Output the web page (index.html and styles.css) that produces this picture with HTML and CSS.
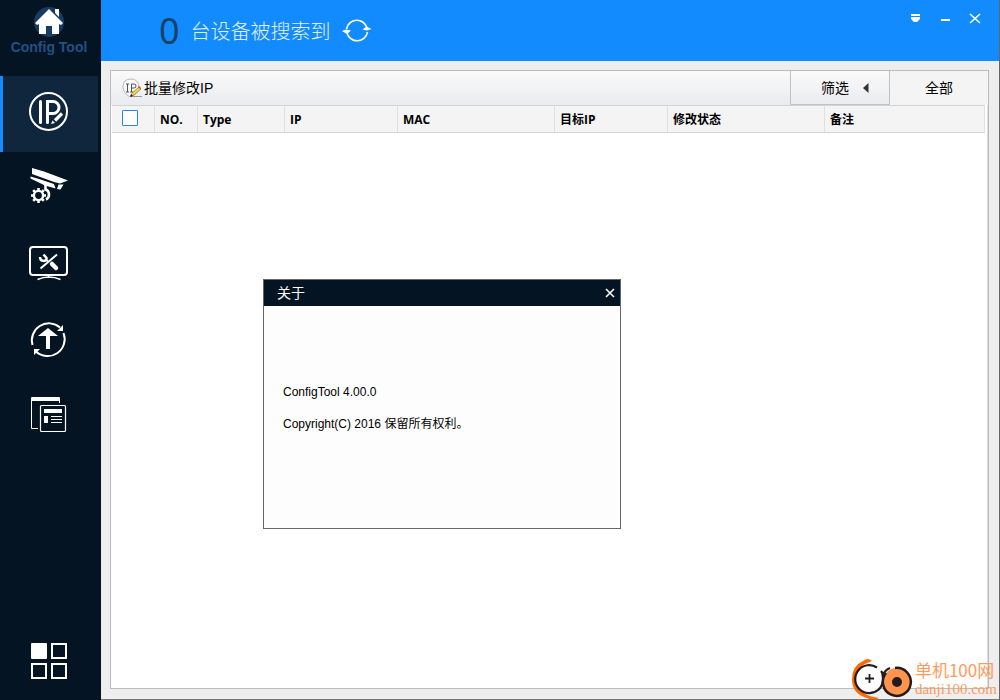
FILE: index.html
```html
<!DOCTYPE html>
<html lang="zh-CN">
<head>
<meta charset="utf-8">
<title>Config Tool</title>
<meta name="viewport" content="width=device-width, initial-scale=1">
<link rel="stylesheet" href="styles.css">
</head>
<body>
<div class="window">
  <aside class="sidebar">
    <div class="brand">
      <svg class="brand-icon" viewBox="0 0 32 32" aria-hidden="true">
        <circle cx="16" cy="16" r="15" fill="#173c63"/>
        <path d="M16 3 30 17 28 19 26 18V28H19V20H13V28H6V18L4 19 2 17ZM22 3h4v8l-4-4Z" fill="#fff"/>
      </svg>
      <span class="brand-name">Config Tool</span>
    </div>
    <nav class="nav">
      <button class="nav-item active" type="button" aria-label="修改IP">
        <svg class="nav-icon" viewBox="0 0 40 44">
          <circle cx="19.500" cy="19.500" r="18.500" stroke-width="2"/>
          <path d="M11.500 9.500v21M18.500 30.500V9.500h5.500a6 6 0 0 1 0 12h-5.500" stroke-width="3" stroke-linecap="round"/>
          <path d="M33 21.500 26 28.500" stroke-width="3.200"/>
          <path class="solid" d="m23.500 28.500 2.500 2.500-4 1Z"/>
        </svg>
      </button>
      <button class="nav-item" type="button" aria-label="设备配置">
        <svg class="nav-icon" viewBox="0 0 40 44">
          <path class="solid" d="M3 0 15 3.500 39 12.500 31 15.500 25 14 3 6ZM1.500 8.500 10 11 25 16 26.500 20.500 16 17.500 1.500 10.500ZM29.500 16.500h5l-3 5-3.500-.5Z"/>
          <path d="M16.500 16v5.500q3.500 1 3.500 5c0 2.500-1 4-3 5" stroke-width="2.600"/>
          <circle cx="9.500" cy="27.500" r="4.600" stroke-width="2.400"/>
          <path d="M9.500 20v3M9.500 32v3M2 27.500h3M14 27.500h3M4.200 22.200l2 2M12.800 30.800l2 2M14.800 22.200l-2 2M6.200 30.800l-2 2" stroke-width="2.600"/>
        </svg>
      </button>
      <button class="nav-item" type="button" aria-label="系统设置">
        <svg class="nav-icon" viewBox="0 0 40 44">
          <rect x="1" y="3" width="37" height="28" rx="3" stroke-width="2"/>
          <path d="M8.500 35.500c7-3 16-3 23 0M19.500 31v3" stroke-width="1.500"/>
          <path d="M11.500 24.500 28 10.500" stroke-width="2"/>
          <path d="m23 20 4 4" stroke-width="4.500" stroke-linecap="round"/>
          <path d="M11 13c0 5 7 5 6.500 1l-3-3.500M17 16l2 1" stroke-width="2.500"/>
        </svg>
      </button>
      <button class="nav-item" type="button" aria-label="升级">
        <svg class="nav-icon" viewBox="0 0 40 44">
          <path d="M3.500 25A17 17 0 0 1 31 7.500M34.500 13A17 17 0 0 1 7 31.500" stroke-width="2"/>
          <path class="solid" d="M34 5v6h-6ZM5 29h6l-6 6ZM19 8 29 16h-8v13h-4V16H9Z"/>
        </svg>
      </button>
      <button class="nav-item" type="button" aria-label="日志">
        <svg class="nav-icon" viewBox="0 0 40 44">
          <path class="solid" d="M2 2q0-1 1-1H30q1 0 1 1V7H30V5H3V32H9V33H3q-1 0-1-1ZM15 13H33v4H15ZM15 20h4v7H15ZM22 20H33v1H22ZM22 23H33v1H22ZM22 26H33v1H22Z"/>
          <rect x="11.500" y="9.500" width="25" height="26" rx="1" stroke-width="1.200"/>
        </svg>
      </button>
    </nav>
    <button class="apps" type="button" aria-label="全部功能">
      <svg class="apps-icon" viewBox="0 0 36 36">
        <rect class="solid" x="0" y="0" width="16" height="16" rx="1"/>
        <path d="M21 1h14v14H21ZM1 21h14v14H1ZM21 21h14v14H21Z" stroke-width="2"/>
      </svg>
    </button>
  </aside>

  <div class="main">
    <header class="topbar">
      <h1 class="found"><span class="count">0</span><span class="found-label">台设备被搜索到</span></h1>
      <button class="refresh" type="button" aria-label="刷新">
        <svg viewBox="0 0 30 24">
          <path d="M4.500 10A10.500 10.500 0 0 1 25 9M25.500 13A10.500 10.500 0 0 1 5 14" fill="none" stroke="#fff" stroke-width="1.600"/>
          <path d="M0 11 5 8 9 11.500 4 12.500ZM20.500 12.500 25 11.500 29.500 13 24.500 15.500Z" transform="matrix(1 0 0 -1 0 23)" fill="#fff"/>
        </svg>
      </button>
      <div class="controls">
        <button type="button" aria-label="菜单"><svg viewBox="0 0 12 12"><path d="M2 2h9v2H2ZM2 5h9v2L8 10H5L2 7Z" fill="#fff"/></svg></button>
        <button type="button" aria-label="最小化"><svg viewBox="0 0 12 12"><path d="M2 7h9v2H2Z" fill="#fff"/></svg></button>
        <button type="button" aria-label="关闭"><svg viewBox="0 0 12 12"><path d="m1 2 10 9M11 2 1 11" stroke="#fff" stroke-width="1.600"/></svg></button>
      </div>
    </header>

    <main class="panel">
      <div class="toolbar">
        <button class="batch" type="button">
          <svg class="batch-icon" viewBox="0 0 20 20" aria-hidden="true">
            <path d="M9 1a8 8 0 0 1 7 12Q13 18 8 19 1 15 1 9 1 1 9 1Z" fill="#f8f8f8" stroke="#b9b9b9"/>
            <path d="M4 6h3M5.500 6v8M4 14h3M9.500 14V6H12a2 2 0 0 1 0 4H9.500M8 14h3" fill="none" stroke="#555"/>
            <path d="M9 18.500h11" stroke="#999"/>
            <path d="m9 18 1-3 7-6 2 2-7 6Z" fill="#f0d455" stroke="#89722e" stroke-width=".7"/>
            <path d="m16 9 1-1 2 2-1 1Z" fill="#e33b32"/>
            <path d="m8 19 1-3 2 2Z" fill="#222"/>
          </svg>
          批量修改IP
        </button>
        <button class="filter" type="button">筛选
          <svg class="arrow" viewBox="0 0 6 10" aria-hidden="true"><path d="M5.500 0v10L0 5Z" fill="#333"/></svg>
        </button>
        <button class="all" type="button">全部</button>
      </div>
      <div class="list">
        <table class="devices">
          <colgroup><col class="c-check"><col class="c-no"><col class="c-type"><col class="c-ip"><col class="c-mac"><col class="c-target"><col class="c-state"><col></colgroup>
          <thead>
            <tr>
              <th><input class="check" type="checkbox" aria-label="全选"></th>
              <th>NO.</th><th>Type</th><th>IP</th><th>MAC</th><th>目标IP</th><th>修改状态</th><th>备注</th>
            </tr>
          </thead>
        </table>
      </div>
    </main>
  </div>

  <section class="about" role="dialog" aria-labelledby="about-title">
    <header class="about-head">
      <h2 id="about-title">关于</h2>
      <button type="button" aria-label="关闭"><svg viewBox="0 0 10 10"><path d="m1 1 8 8M9 1 1 9" stroke="#fff" stroke-width="1.600"/></svg></button>
    </header>
    <div class="about-body">
      <p>ConfigTool 4.00.0</p>
      <p>Copyright(C) 2016 保留所有权利。</p>
    </div>
  </section>

  <div class="watermark">
    <svg class="mark" viewBox="0 0 64 42" aria-hidden="true">
      <path d="M21 3Q17-1 12 3 1 8 1 21q0 15 15 19 7 3 12 0-17-2-22-13Q1 13 14 6Z" fill="#ff6a00"/>
      <circle cx="18" cy="21" r="14" fill="#fff"/>
      <path d="M26 9.500A14 14 0 1 0 27 32Q31 29 32 23C32 17 32 15 30 13M32 17q2-5 7-7" fill="none" stroke="#241c1c" stroke-width="2.200"/>
      <path d="M14 20.500h9M18.500 16v9" stroke="#241c1c" stroke-width="1.800"/>
      <circle cx="46" cy="24" r="14" fill="#ff944d"/>
      <path d="M44 10a14 14 0 1 1-9 5" fill="none" stroke="#241c1c" stroke-width="2.500"/>
      <circle cx="46" cy="24" r="3.500" fill="#241c1c" stroke="#241c1c" stroke-width="3"/>
    </svg>
    <div class="mark-text"><span class="mark-name">单机100网</span><span class="mark-url">danji100.com</span></div>
  </div>
</div>
</body>
</html>
```
FILE: styles.css
```css
* { box-sizing: border-box; }

body {
  margin: 0;
  font: 14px/20px "Liberation Sans", "Noto Sans CJK SC", sans-serif;
  color: #000;
}

button {
  display: flex;
  align-items: center;
  justify-content: center;
  padding: 0;
  border: 0;
  background: none;
  font: inherit;
  color: inherit;
}

svg { display: block; flex: none; }
h1, h2, p { margin: 0; font-weight: normal; }

.window {
  position: relative;
  display: flex;
  min-height: 100vh;
  background: #eee;
}

.sidebar {
  display: flex;
  flex-direction: column;
  flex: none;
  width: 101px;
  padding-right: 3px;
  background: #051422;
}

.brand {
  display: flex;
  flex-direction: column;
  align-items: center;
  height: 76px;
  padding-top: 6px;
}
.brand-icon { width: 32px; height: 32px; }
.brand-name { color: #235085; font-size: 14px; font-weight: bold; line-height: 18px; }

.nav { flex: 1; }
.nav-item { width: 100%; height: 76px; }
.nav-item.active { background: #10263d; box-shadow: inset 3px 0 #128bff; }
.nav-icon { width: 40px; height: 44px; }
.nav-icon, .apps-icon { fill: none; stroke: #fff; }
.solid { fill: #fff; stroke: none; }
.apps { padding: 20px 0 21px; }
.apps-icon { width: 36px; height: 36px; }

.main {
  display: flex;
  flex-direction: column;
  flex: 1;
  min-width: 0;
  border-right: 1px solid #666;
  border-bottom: 1px solid #777;
}

.topbar {
  display: flex;
  align-items: center;
  height: 61px;
  padding: 0 18px 0 58px;
  background: #128bff;
}
.found { display: flex; align-items: center; gap: 11px; }
.count { color: #194268; font: 36px/40px "Noto Sans", sans-serif; }
.found-label { color: #e2f1ff; font: 300 20px/28px "Noto Sans CJK SC", sans-serif; }
.refresh { width: 30px; height: 24px; margin-left: 11px; }
.refresh svg { width: 30px; height: 24px; }
.controls { display: flex; align-self: flex-start; gap: 18px; margin: 12px 0 0 auto; }
.controls svg { width: 12px; height: 12px; }

.panel {
  display: flex;
  flex-direction: column;
  flex: 1;
  margin: 9px 10px 10px 9px;
  border: 1px solid #bbb;
  background: #fff;
}

.toolbar {
  display: flex;
  height: 34px;
  background: linear-gradient(#fafafa, #eaebef);
}
.batch { gap: 2px; margin-right: auto; padding-left: 11px; }
.batch-icon { width: 20px; height: 20px; }
.filter {
  gap: 14px;
  width: 100px;
  padding-left: 10px;
  border: 1px solid #c2c2c2;
  border-top: 0;
}
.arrow { width: 6px; height: 10px; }
.all { width: 98px; background: #f4f4f4; }

.list { flex: 1; padding: 0 2px 0 1px; border-right: 1px solid #ddd; }
.devices {
  width: 100%;
  border-collapse: separate;
  border-spacing: 0;
  table-layout: fixed;
}
.devices th {
  height: 28px;
  padding: 1px 5px 0;
  border: solid #d4d4d4;
  border-width: 1px 0;
  border-right: 1px solid #e0e0e0;
  background: #f4f4f4;
  font: bold 12px/17px "Open Sans", "Noto Sans CJK SC", sans-serif;
  text-align: left;
}
.devices th:first-child { padding: 0 0 2px 10px; }
.c-check, .c-no { width: 43px; }
.c-type { width: 87px; }
.c-ip, .c-target { width: 113px; }
.c-mac, .c-state { width: 157px; }

.check {
  display: block;
  appearance: none;
  width: 16px;
  height: 16px;
  margin: 0;
  border: 1px solid #2588e0;
  border-radius: 1px;
  background: #fff;
}

.about {
  position: absolute;
  top: 279px;
  left: 263px;
  width: 358px;
  border: 1px solid #666;
  background: #fdfdfd;
}
.about-head {
  display: flex;
  align-items: center;
  justify-content: space-between;
  height: 26px;
  padding: 0 5px 0 13px;
  background: #051422;
  color: #fff;
}
.about-head h2 { font-size: 14px; }
.about-head svg { width: 10px; height: 10px; }
.about-body {
  display: grid;
  gap: 16px;
  padding: 78px 19px 96px;
  font-size: 12px;
  line-height: 16px;
}

.watermark {
  position: absolute;
  right: 3px;
  bottom: 0;
  display: flex;
  align-items: flex-end;
}
.mark { width: 64px; height: 42px; }
.mark-text { display: flex; flex-direction: column; padding-bottom: 2px; color: #ff9a5c; }
.mark-name { font: 17px/20px "Noto Sans CJK SC", sans-serif; }
.mark-url { font: 15px/18px "Liberation Serif", serif; }
```
